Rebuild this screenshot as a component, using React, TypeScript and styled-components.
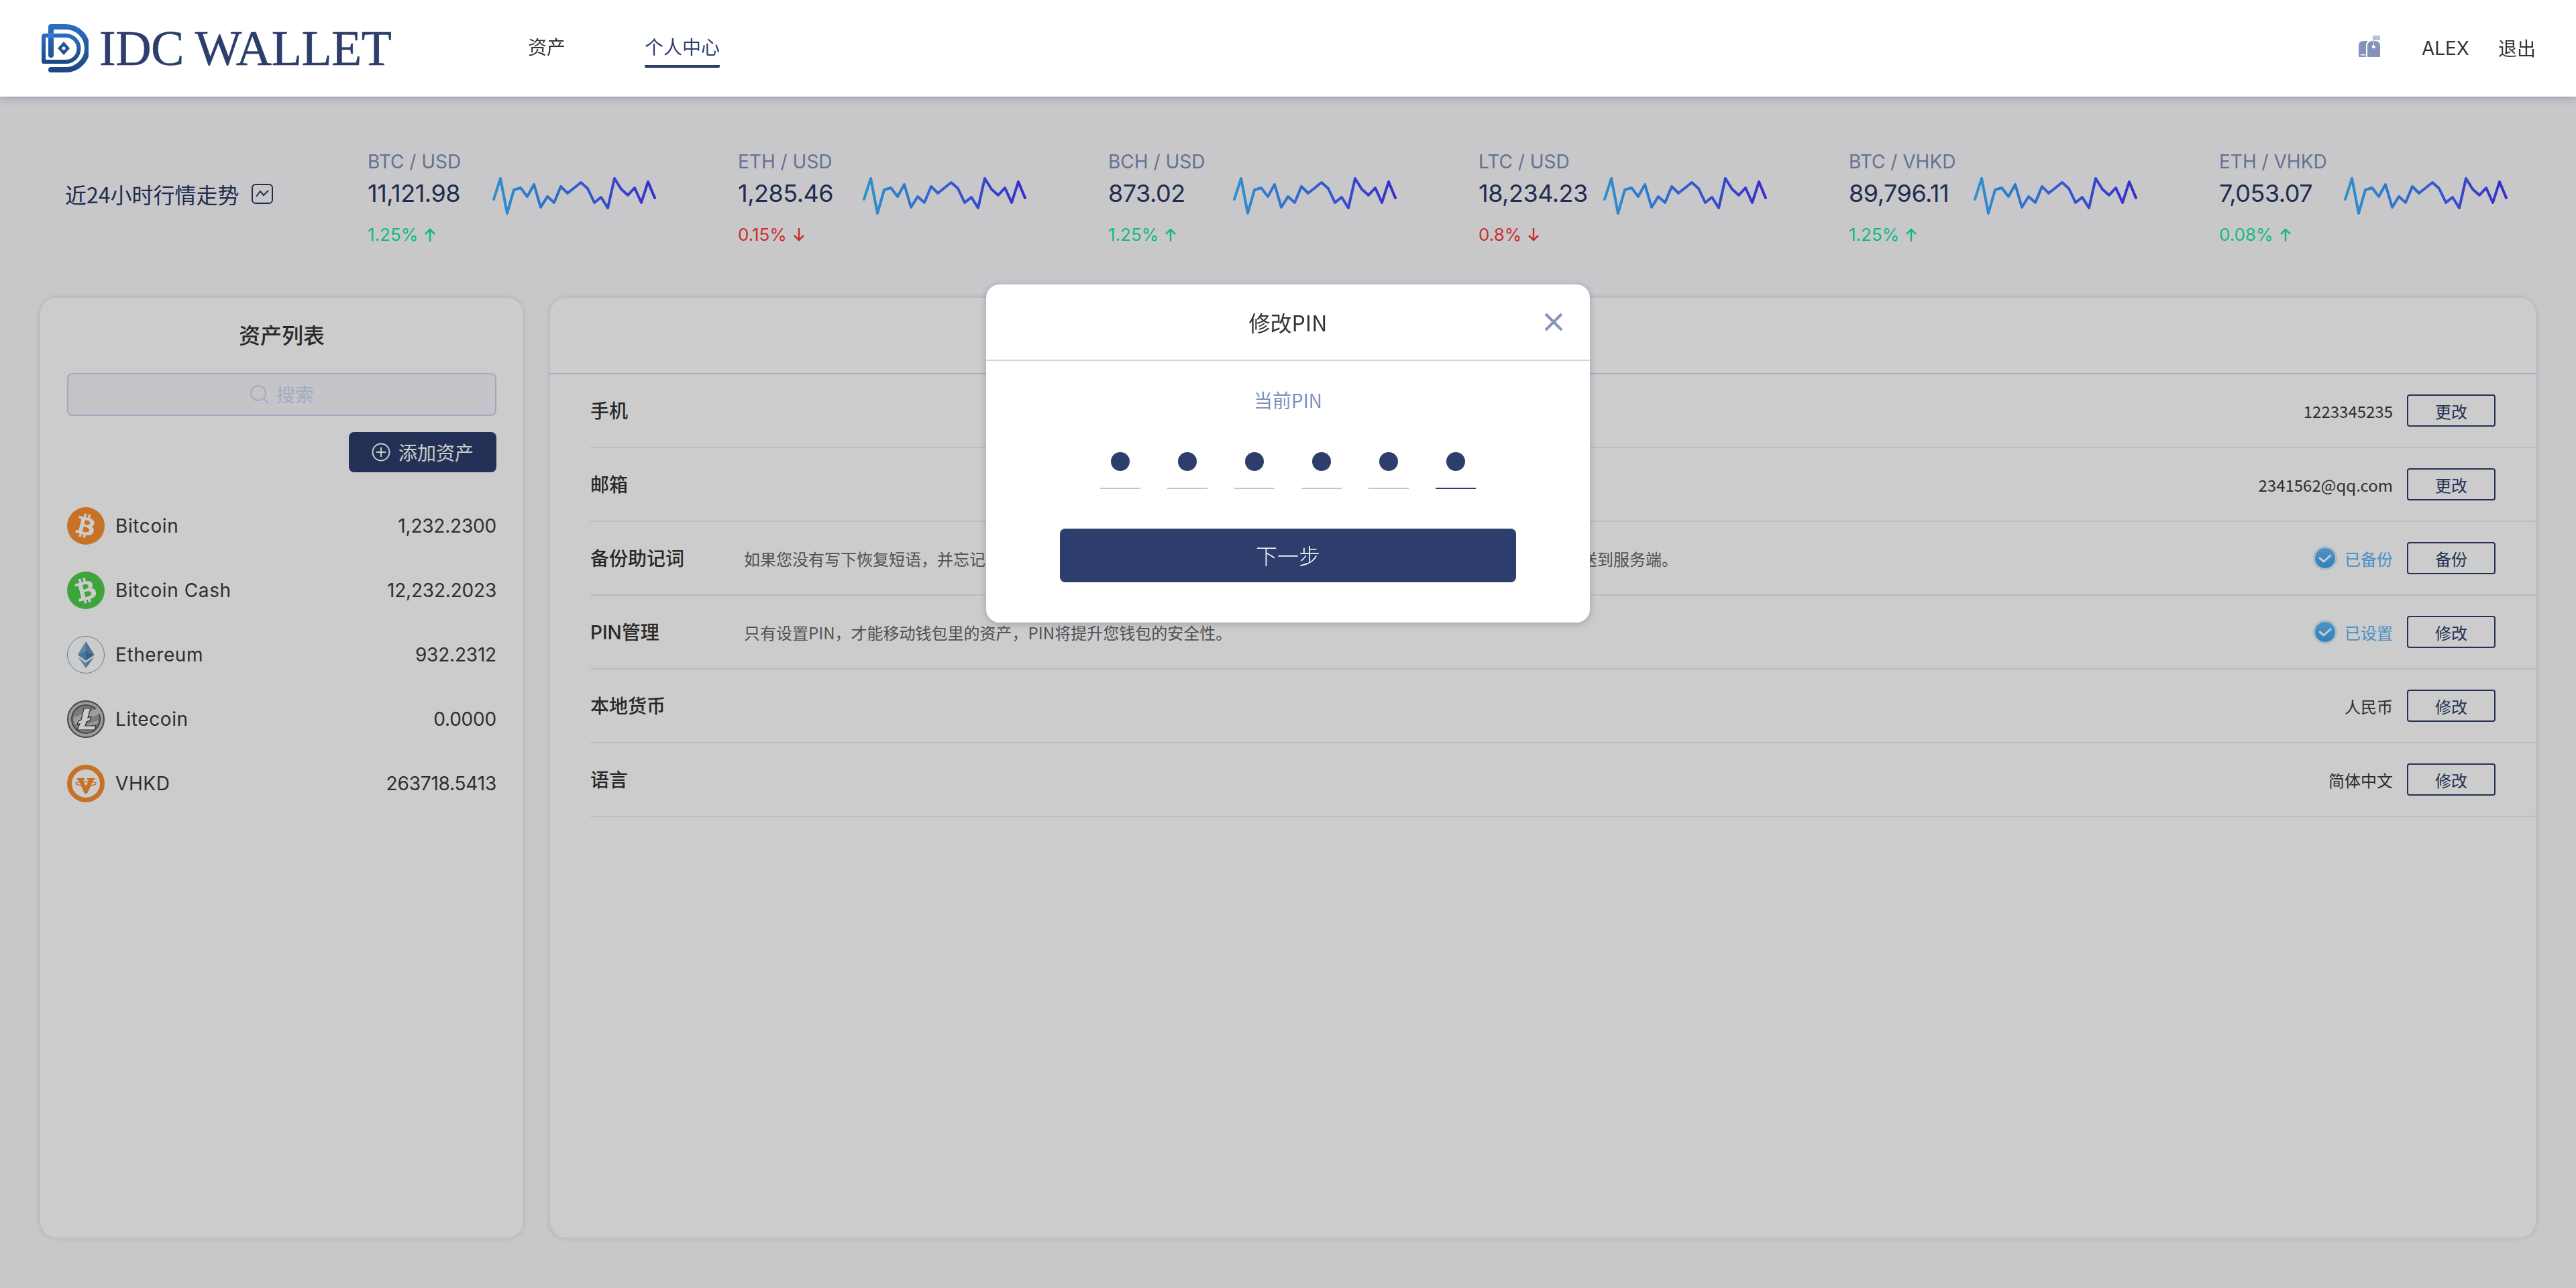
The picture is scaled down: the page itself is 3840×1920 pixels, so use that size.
import React from "react";
import styled, { createGlobalStyle } from "styled-components";
import { FaBtc } from "react-icons/fa";

const NAVY = "#2e3e6c";
const latin = `Inter, "Noto Sans CJK SC", sans-serif`;
const cjk = `"Noto Sans CJK SC", "Noto Sans", sans-serif`;

const GlobalStyle = createGlobalStyle`
  html, body {
    margin: 0;
    padding: 0;
    background: #fafbfe;
    font-family: ${cjk};
    color: #333;
  }
  * { box-sizing: border-box; }
`;

const SPARK = [
  [206, 77], [216, 46], [226, 98], [236, 63], [246, 60], [256, 73], [266, 55], [276, 89],
  [286, 73], [296, 82], [306, 58], [316, 68], [326, 60], [336, 52], [346, 61], [356, 82],
  [366, 74], [376, 90], [386, 46], [396, 62], [406, 71], [416, 60], [426, 82], [436, 51], [446, 75],
];
const sparkPoints = SPARK.map(([x, y]) => `${x - 204},${y - 44}`).join(" ");

const TICKERS = [
  { pair: "BTC / USD", value: "11,121.98", pct: "1.25%", up: true },
  { pair: "ETH / USD", value: "1,285.46", pct: "0.15%", up: false },
  { pair: "BCH / USD", value: "873.02", pct: "1.25%", up: true },
  { pair: "LTC / USD", value: "18,234.23", pct: "0.8%", up: false },
  { pair: "BTC / VHKD", value: "89,796.11", pct: "1.25%", up: true },
  { pair: "ETH / VHKD", value: "7,053.07", pct: "0.08%", up: true },
];

const ASSETS = [
  { name: "Bitcoin", amount: "1,232.2300", icon: "btc" },
  { name: "Bitcoin Cash", amount: "12,232.2023", icon: "bch" },
  { name: "Ethereum", amount: "932.2312", icon: "eth" },
  { name: "Litecoin", amount: "0.0000", icon: "ltc" },
  { name: "VHKD", amount: "263718.5413", icon: "vhkd" },
];

const SETTINGS = [
  { label: "手机", value: "1223345235", action: "更改" },
  { label: "邮箱", value: "2341562@qq.com", action: "更改" },
  {
    label: "备份助记词",
    desc: "如果您没有写下恢复短语，并忘记了密码，您将永远无法恢复钱包里的资产，助记词只会保存在本地设备上，绝不会发送到服务端。",
    status: "已备份",
    action: "备份",
  },
  {
    label: "PIN管理",
    desc: "只有设置PIN，才能移动钱包里的资产，PIN将提升您钱包的安全性。",
    status: "已设置",
    action: "修改",
  },
  { label: "本地货币", value: "人民币", action: "修改" },
  { label: "语言", value: "简体中文", action: "修改" },
];

function Logo() {
  return (
    <svg width="72" height="72" viewBox="0 0 72 72" fill="none">
      <defs>
        <linearGradient id="logoGrad" x1="0" y1="0" x2="0" y2="1">
          <stop offset="0" stopColor="#2a6cc2" />
          <stop offset="1" stopColor="#1b4a82" />
        </linearGradient>
      </defs>
      <path d="M16 46V4H38A32 32 0 0 1 38 68H16" stroke="url(#logoGrad)" strokeWidth="8" strokeLinejoin="round" strokeLinecap="round" />
      <path d="M16 17H38A19.500 19.500 0 0 1 38 56H5V19Q5 17 7 17H16" stroke="url(#logoGrad)" strokeWidth="6" strokeLinejoin="round" />
      <rect x="12" y="13" width="8" height="8" fill="#3676d8" />
      <path d="M35 26L44 36L35 46L26 36Z" fill="#22568f" />
      <circle cx="35" cy="36" r="2.500" fill="#fff" />
    </svg>
  );
}

function Mailbox() {
  return (
    <svg width="32" height="34" viewBox="0 0 32 34" fill="none">
      <path d="M21 2Q21 0 23 0H31Q32 0 32 1V6Q32 7 31 7H23V14H21Z" fill="#b8c0d8" />
      <path d="M8 8H14Q11 10 11 15V32H1Q0 32 0 31V15Q0 8 8 8Z" fill="#8592bb" />
      <path d="M17 9Q19 8 21 8V15A2 2 0 0 0 23 19A2 2 0 0 0 23 15V8H25Q32 9 32 15V31Q32 32 31 32H13V15Q13 11 17 9Z" fill="#8592bb" />
      <rect x="3" y="28" width="7" height="1.500" fill="#fff" />
    </svg>
  );
}

function ChartIcon() {
  return (
    <svg width="32" height="30" viewBox="0 0 32 30" fill="none" stroke="#2a3763" strokeWidth="2">
      <rect x="1" y="1" width="30" height="28" rx="5" />
      <path d="M7 19L13 11L18 17L25 10" strokeWidth="2" />
    </svg>
  );
}

function Arrow({ up }: { up: boolean }) {
  return (
    <svg width="16" height="20" viewBox="0 0 16 20" fill="none" stroke="currentColor" strokeWidth="2.500">
      {up ? <path d="M8 20V2M1 9L8 2L15 9" /> : <path d="M8 0V18M1 11L8 18L15 11" />}
    </svg>
  );
}

function Spark({ id }: { id: string }) {
  return (
    <svg width="248" height="60" viewBox="0 0 248 60" fill="none">
      <defs>
        <linearGradient id={id} gradientUnits="userSpaceOnUse" x1="0" y1="0" x2="248" y2="0">
          <stop offset="0" stopColor="#3ab6ff" />
          <stop offset="1" stopColor="#4836ff" />
        </linearGradient>
      </defs>
      <polyline points={sparkPoints} stroke={`url(#${id})`} strokeWidth="4" strokeLinecap="round" strokeLinejoin="round" />
    </svg>
  );
}

function CoinIcon({ kind }: { kind: string }) {
  if (kind === "btc") {
    return (
      <CoinDisc $bg="#fb8f32" $tilt={14}>
        <FaBtc size={36} color="#fff" />
      </CoinDisc>
    );
  }
  if (kind === "bch") {
    return (
      <CoinDisc $bg="#4ece4b" $tilt={-14}>
        <FaBtc size={38} color="#fff" />
      </CoinDisc>
    );
  }
  if (kind === "eth") {
    return (
      <svg width="56" height="56" viewBox="0 0 56 56">
        <circle cx="28" cy="28" r="27.500" fill="none" stroke="#6f9dc3" strokeWidth="1" />
        <path d="M28 8L15.700 28L28 22Z" fill="#78a9d2" />
        <path d="M28 8L40.700 28L28 22Z" fill="#5c90bd" />
        <path d="M28 22L15.700 28L28 37Z" fill="#5c90bd" />
        <path d="M28 22L40.700 28L28 37Z" fill="#477ba7" />
        <path d="M15.700 31L28 40L28 48Z" fill="#78a9d2" />
        <path d="M40.700 31L28 40L28 48Z" fill="#5c90bd" />
      </svg>
    );
  }
  if (kind === "ltc") {
    return (
      <svg width="56" height="56" viewBox="0 0 56 56">
        <circle cx="28" cy="28" r="27" fill="#c4c4c4" stroke="#555" strokeWidth="2" />
        <circle cx="28" cy="28" r="21" fill="#9c9c9c" stroke="#555" strokeWidth="2" />
        <path d="M9 26L46 12L49 20L12 36Z" fill="#c6c6c6" />
        <path d="M14 42L46 30L47 33L16 45Z" fill="#c6c6c6" />
        <path d="M25 12H35L31 26L36 24L34 30L29 32L27 38H43L41 44H15L19 35L15 36L17 31L21 29Z" fill="#fff" stroke="#333" strokeWidth="1.200" />
      </svg>
    );
  }
  return (
    <svg width="56" height="56" viewBox="0 0 56 56">
      <circle cx="28" cy="28" r="24.500" fill="none" stroke="#f78e30" strokeWidth="7" />
      <path d="M15 20H26V23H24L28 33L32 23H30V20H41V23H39L30 43H26L17 23H15Z" fill="#f78e30" />
      <ellipse cx="28" cy="28" rx="15" ry="3" fill="none" stroke="#f78e30" strokeWidth="1.500" />
    </svg>
  );
}

function CheckBadge() {
  return (
    <svg width="36" height="36" viewBox="0 0 36 36">
      <defs>
        <linearGradient id="checkGrad" x1="0" y1="0" x2="0" y2="1">
          <stop offset="0" stopColor="#65b8f2" />
          <stop offset="1" stopColor="#3aa3ee" />
        </linearGradient>
      </defs>
      <circle cx="18" cy="18" r="18" fill="#d6e9f8" />
      <circle cx="18" cy="18" r="15" fill="url(#checkGrad)" />
      <path d="M10 18L16 23L26 14" fill="none" stroke="#fff" strokeWidth="3" strokeLinecap="round" strokeLinejoin="round" />
    </svg>
  );
}

export default function App() {
  return (
    <Page>
      <GlobalStyle />
      <Header>
        <Brand>
          <Logo />
          <Wordmark>IDC WALLET</Wordmark>
        </Brand>
        <Nav>
          <NavLink>资产</NavLink>
          <NavLink $active>个人中心</NavLink>
        </Nav>
        <UserArea>
          <MailSlot>
            <Mailbox />
          </MailSlot>
          <UserName>ALEX</UserName>
          <Logout>退出</Logout>
        </UserArea>
      </Header>

      <TickerStrip>
        <TickerTitle>
          近24小时行情走势
          <ChartIcon />
        </TickerTitle>
        {TICKERS.map((t, i) => (
          <Ticker key={t.pair + i}>
            <Pair>{t.pair}</Pair>
            <ValueRow>
              <Value>{t.value}</Value>
              <Spark id={`spark${i}`} />
            </ValueRow>
            <Change $up={t.up}>
              {t.pct}
              <Arrow up={t.up} />
            </Change>
          </Ticker>
        ))}
      </TickerStrip>

      <Panels>
        <AssetPanel>
          <AssetTitle>资产列表</AssetTitle>
          <SearchBox>
            <svg width="30" height="30" viewBox="0 0 30 30" fill="none" stroke="#cdd6ee" strokeWidth="2">
              <circle cx="13" cy="13" r="11" />
              <path d="M22 22L28 28" />
            </svg>
            <SearchText>搜索</SearchText>
          </SearchBox>
          <AddRow>
            <AddButton>
              <svg width="28" height="28" viewBox="0 0 28 28" fill="none" stroke="#fff" strokeWidth="2">
                <circle cx="14" cy="14" r="12.500" />
                <path d="M14 7V21M7 14H21" />
              </svg>
              添加资产
            </AddButton>
          </AddRow>
          <AssetList>
            {ASSETS.map((a) => (
              <AssetRow key={a.name}>
                <CoinIcon kind={a.icon} />
                <AssetName>{a.name}</AssetName>
                <AssetAmount>{a.amount}</AssetAmount>
              </AssetRow>
            ))}
          </AssetList>
        </AssetPanel>

        <SettingsPanel>
          <TabBar />
          {SETTINGS.map((s) => (
            <SettingRow key={s.label}>
              <SettingLabel>{s.label}</SettingLabel>
              {s.desc && <SettingDesc>{s.desc}</SettingDesc>}
              <SettingEnd>
                {s.value && <SettingValue>{s.value}</SettingValue>}
                {s.status && (
                  <Status>
                    <CheckBadge />
                    {s.status}
                  </Status>
                )}
                <OutlineButton>{s.action}</OutlineButton>
              </SettingEnd>
            </SettingRow>
          ))}
        </SettingsPanel>
      </Panels>

      <Mask>
        <Modal>
          <ModalHead>
            修改PIN
            <CloseIcon width="28" height="28" viewBox="0 0 28 28" fill="none" stroke="#8593bd" strokeWidth="4">
              <path d="M2 2L26 26M26 2L2 26" />
            </CloseIcon>
          </ModalHead>
          <ModalBody>
            <PinHint>当前PIN</PinHint>
            <PinRow>
              {[0, 1, 2, 3, 4, 5].map((i) => (
                <PinCell key={i} $active={i === 5}>
                  <PinDot />
                </PinCell>
              ))}
            </PinRow>
            <NextButton>下一步</NextButton>
          </ModalBody>
        </Modal>
      </Mask>
    </Page>
  );
}

const Page = styled.div`
  width: 3840px;
  height: 1920px;
  overflow: hidden;
  background: #fafbfe;
`;

const Header = styled.header`
  position: relative;
  z-index: 20;
  height: 144px;
  background: #fff;
  box-shadow: 0 4px 10px rgba(60, 70, 110, 0.25);
  display: flex;
  align-items: center;
  padding: 0 60px;
  font-size: 28px;
`;

const Brand = styled.div`
  display: flex;
  align-items: center;
  width: 727px;
  gap: 16px;
`;

const Wordmark = styled.span`
  font-family: "Liberation Serif", serif;
  font-size: 74px;
  line-height: 72px;
  letter-spacing: -0.5px;
  color: ${NAVY};
  -webkit-text-stroke: 0.5px ${NAVY};
`;

const Nav = styled.nav`
  display: flex;
  gap: 118px;
  margin-top: -3px;
`;

const NavLink = styled.a<{ $active?: boolean }>`
  display: block;
  height: 60px;
  line-height: 56px;
  color: ${(p) => (p.$active ? NAVY : "#333")};
  border-bottom: 4px solid ${(p) => (p.$active ? NAVY : "transparent")};
  border-radius: 2px;
`;

const UserArea = styled.div`
  margin-left: auto;
  display: flex;
  align-items: center;
  color: #333;
`;

const MailSlot = styled.div`
  display: flex;
  margin-right: 62px;
  margin-top: -4px;
`;

const UserName = styled.span`
  font-family: ${latin};
  margin-right: 43px;
`;

const Logout = styled.span`
  margin-top: -3px;
`;

const TickerStrip = styled.section`
  height: 300px;
  padding: 79px 0 0 97px;
  display: flex;
`;

const TickerTitle = styled.div`
  flex: 0 0 451px;
  display: flex;
  align-items: center;
  gap: 18px;
  height: 132px;
  font-size: 32px;
  color: #2a3763;
`;

const Ticker = styled.div`
  flex: 0 0 552px;
  font-family: ${latin};
  &:last-child {
    flex-basis: 480px;
  }
`;

const Pair = styled.div`
  font-size: 28px;
  line-height: 36px;
  color: #7f8eb9;
`;

const ValueRow = styled.div`
  display: flex;
  align-items: center;
  height: 64px;
  svg {
    margin: 6px 0 0 1px;
  }
`;

const Value = styled.div`
  width: 185px;
  font-size: 36px;
  letter-spacing: -0.5px;
  color: #2a3763;
  margin-top: -6px;
`;

const Change = styled.div<{ $up: boolean }>`
  display: flex;
  align-items: center;
  gap: 10px;
  margin-top: 10px;
  font-size: 26px;
  line-height: 34px;
  color: ${(p) => (p.$up ? "#14e8a0" : "#fa3c3b")};
`;

const Panels = styled.main`
  display: flex;
  gap: 40px;
  padding: 0 60px;
  height: 1401px;
`;

const Card = styled.div`
  background: #fff;
  border-radius: 24px;
  box-shadow: 0 0 10px rgba(40, 40, 60, 0.16);
`;

const AssetPanel = styled(Card)`
  flex: 0 0 720px;
  padding: 0 40px;
`;

const AssetTitle = styled.h2`
  margin: 0;
  height: 112px;
  line-height: 108px;
  text-align: center;
  font-size: 32px;
  font-weight: 500;
  color: #333;
`;

const SearchBox = styled.div`
  height: 64px;
  border: 2px solid #c8d4f2;
  border-radius: 8px;
  background: #f5f6fc;
  display: flex;
  align-items: center;
  justify-content: center;
  gap: 10px;
  font-size: 28px;
  color: #cdd6ee;
`;

const SearchText = styled.span`
  margin-top: -2px;
`;

const AddRow = styled.div`
  display: flex;
  justify-content: flex-end;
  margin-top: 24px;
`;

const AddButton = styled.button`
  width: 220px;
  height: 60px;
  border: 0;
  border-radius: 8px;
  background: ${NAVY};
  color: #fff;
  font-family: ${cjk};
  font-size: 28px;
  display: flex;
  align-items: center;
  justify-content: center;
  gap: 12px;
  padding: 0;
`;

const AssetList = styled.div`
  margin-top: 32px;
`;

const AssetRow = styled.div`
  height: 96px;
  display: flex;
  align-items: center;
  font-family: ${latin};
  font-size: 28px;
  color: #3a3a3a;
`;

const CoinDisc = styled.div<{ $bg: string; $tilt: number }>`
  width: 56px;
  height: 56px;
  border-radius: 50%;
  background: ${(p) => p.$bg};
  display: flex;
  align-items: center;
  justify-content: center;
  svg {
    transform: rotate(${(p) => p.$tilt}deg);
  }
`;

const AssetName = styled.span`
  margin-left: 16px;
  letter-spacing: 0.6px;
`;

const AssetAmount = styled.span`
  margin-left: auto;
  letter-spacing: -0.2px;
`;

const SettingsPanel = styled(Card)`
  flex: 1;
`;

const TabBar = styled.div`
  height: 114px;
  border-bottom: 2px solid #cfdbf5;
`;

const SettingRow = styled.div`
  height: 110px;
  margin-left: 60px;
  padding-right: 60px;
  border-bottom: 2px solid #eaeafc;
  display: flex;
  align-items: center;
`;

const SettingLabel = styled.div`
  width: 229px;
  margin-top: -2px;
  font-family: ${latin};
  font-size: 28px;
  font-weight: 500;
  color: #333;
`;

const SettingDesc = styled.div`
  font-size: 24px;
  color: #666;
`;

const SettingEnd = styled.div`
  margin-left: auto;
  display: flex;
  align-items: center;
  gap: 21px;
`;

const SettingValue = styled.span`
  font-size: 24px;
  color: #3a3a3a;
`;

const Status = styled.span`
  display: flex;
  align-items: center;
  gap: 11px;
  font-size: 24px;
  color: #55b5fb;
`;

const OutlineButton = styled.button`
  width: 132px;
  height: 48px;
  padding: 0;
  border: 2px solid ${NAVY};
  border-radius: 4px;
  background: #fff;
  color: ${NAVY};
  font-family: ${cjk};
  font-size: 24px;
`;

const Mask = styled.div`
  position: fixed;
  inset: 0;
  z-index: 10;
  background: rgba(0, 0, 0, 0.2);
  display: flex;
  justify-content: center;
  align-items: flex-start;
  padding-top: 424px;
`;

const Modal = styled.div`
  width: 900px;
  height: 504px;
  background: #fff;
  border-radius: 20px;
  box-shadow: 0 2px 12px rgba(60, 70, 110, 0.35);
`;

const ModalHead = styled.div`
  position: relative;
  height: 114px;
  border-bottom: 2px solid #cdd6ea;
  display: flex;
  align-items: center;
  justify-content: center;
  font-size: 32px;
  color: #333;
`;

const CloseIcon = styled.svg`
  position: absolute;
  right: 40px;
  top: 42px;
`;

const ModalBody = styled.div`
  display: flex;
  flex-direction: column;
  align-items: center;
`;

const PinHint = styled.div`
  margin-top: 38px;
  font-size: 28px;
  line-height: 40px;
  color: #7e8fbd;
`;

const PinRow = styled.div`
  display: flex;
  gap: 40px;
  margin-top: 58px;
`;

const PinCell = styled.div<{ $active?: boolean }>`
  width: 60px;
  height: 55px;
  display: flex;
  justify-content: center;
  border-bottom: 2px solid ${(p) => (p.$active ? NAVY : "#c0c4d8")};
`;

const PinDot = styled.span`
  width: 28px;
  height: 28px;
  border-radius: 50%;
  background: ${NAVY};
`;

const NextButton = styled.button`
  width: 680px;
  height: 80px;
  margin-top: 59px;
  padding: 0 0 2px;
  border: 0;
  border-radius: 8px;
  background: ${NAVY};
  color: #fff;
  font-family: ${cjk};
  font-size: 32px;
  font-weight: 300;
`;
